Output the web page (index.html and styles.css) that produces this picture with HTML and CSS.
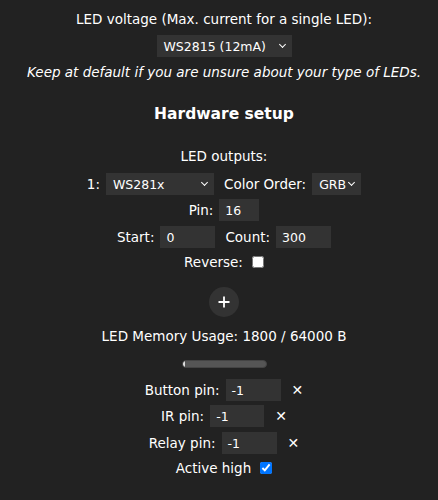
FILE: index.html
```html
<!DOCTYPE html>
<html>
<head>
<meta charset="utf-8">
<link rel="stylesheet" href="styles.css">
</head>
<body>
<div class="page">
  <div class="row r1">LED voltage (Max. current for a single LED):</div>
  <div class="row r2">
    <span class="sel w-ws2815">WS2815 (12mA)<i class="chev"></i></span>
  </div>
  <div class="row r3 note">Keep at default if you are unsure about your type of LEDs.</div>
  <h3 class="row r4">Hardware setup</h3>
  <div class="row r5">LED outputs:</div>
  <div class="row r6">
    <span class="lbl">1:</span>
    <span class="sel w-type">WS281x<i class="chev"></i></span>
    <span class="lbl grp">Color Order:</span>
    <span class="sel w-order">GRB<i class="chev"></i></span>
  </div>
  <div class="row r7">
    <span class="lbl">Pin:</span>
    <span class="inp w-pin">16</span>
  </div>
  <div class="row r8">
    <span class="lbl">Start:</span>
    <span class="inp w-55">0</span>
    <span class="lbl grp">Count:</span>
    <span class="inp w-55">300</span>
  </div>
  <div class="row r9">
    <span class="lbl">Reverse:</span>
    <input type="checkbox" class="cb">
  </div>
  <div class="row r10">
    <span class="plus">
      <svg width="12" height="12" viewBox="0 0 12 12"><path d="M6 0.5V11.5M0.5 6H11.5" stroke="#fff" stroke-width="1.8" fill="none"/></svg>
    </span>
  </div>
  <div class="row r11">LED Memory Usage: 1800 / 64000 B</div>
  <div class="row r12"><div class="bar"><div class="fill" style="width:3%"></div></div></div>
  <div class="row r13">
    <span class="lbl">Button pin:</span>
    <span class="inp w-55">-1</span>
    <span class="x">✕</span>
  </div>
  <div class="row r14">
    <span class="lbl">IR pin:</span>
    <span class="inp w-54">-1</span>
    <span class="x">✕</span>
  </div>
  <div class="row r15">
    <span class="lbl">Relay pin:</span>
    <span class="inp w-55">-1</span>
    <span class="x">✕</span>
  </div>
  <div class="row r16">
    <span class="lbl">Active high</span>
    <input type="checkbox" class="cb" checked>
  </div>
</div>
</body>
</html>
```

FILE: styles.css
```css
html, body {
  margin: 0;
  padding: 0;
  background: #222;
}
body {
  color: #fff;
  font-family: "DejaVu Sans", Verdana, sans-serif;
  font-size: 13.5px;
}
.page {
  display: flex;
  flex-direction: column;
  padding: 8px 0 0 10px;
}
.row {
  display: flex;
  align-items: center;
  justify-content: center;
  white-space: nowrap;
  margin: 0;
}
.r1 { height: 22px; }
.r2 { height: 22px; margin-top: 5px; }
.r3 { height: 20px; margin-top: 5px; font-style: italic; }
.r4 { height: 24px; margin-top: 20px; font-size: 15.5px; font-weight: bold; }
.r5 { height: 20px; margin-top: 20px; }
.r6 { height: 22px; margin-top: 7px; }
.r7 { height: 22px; margin-top: 4px; }
.r8 { height: 22px; margin-top: 5px; }
.r9 { height: 20px; margin-top: 4px; }
.r10 { height: 30px; margin-top: 15px; }
.r11 { height: 20px; margin-top: 9px; }
.r12 { height: 8px; margin-top: 14px; }
.r13 { height: 22px; margin-top: 11px; }
.r14 { height: 22px; margin-top: 4px; }
.r15 { height: 22px; margin-top: 5px; }
.r16 { height: 20px; margin-top: 4px; }

.lbl { margin-right: 6px; }
.grp { margin-left: 10px; }

.sel, .inp {
  position: relative;
  display: inline-flex;
  align-items: center;
  box-sizing: border-box;
  height: 22px;
  background: #333;
  color: #fff;
  font-size: 12.5px;
  padding-left: 7px;
}
.inp { padding-left: 6px; }
.w-ws2815 { width: 135px; }
.w-type { width: 108px; }
.w-order { width: 49px; }
.w-pin { width: 40px; }
.w-55 { width: 55px; }
.w-54 { width: 54px; }

.chev {
  position: absolute;
  right: 7px;
  top: 7px;
  width: 4px;
  height: 4px;
  border-right: 1.5px solid #fff;
  border-bottom: 1.5px solid #fff;
  transform: rotate(45deg);
}

.cb {
  margin: 0 0 0 3px;
  width: 12px;
  height: 12px;
}

.plus {
  display: flex;
  align-items: center;
  justify-content: center;
  width: 30px;
  height: 30px;
  border-radius: 50%;
  background: #333;
}

.bar {
  width: 85px;
  height: 8px;
  border-radius: 4px;
  background: #555;
  overflow: hidden;
  box-sizing: border-box;
  border: 1px solid #444;
}
.fill {
  height: 100%;
  background: #ddd;
  border-radius: 4px 0 0 4px;
}

.x {
  margin-left: 11px;
  font-size: 14px;
}
```
